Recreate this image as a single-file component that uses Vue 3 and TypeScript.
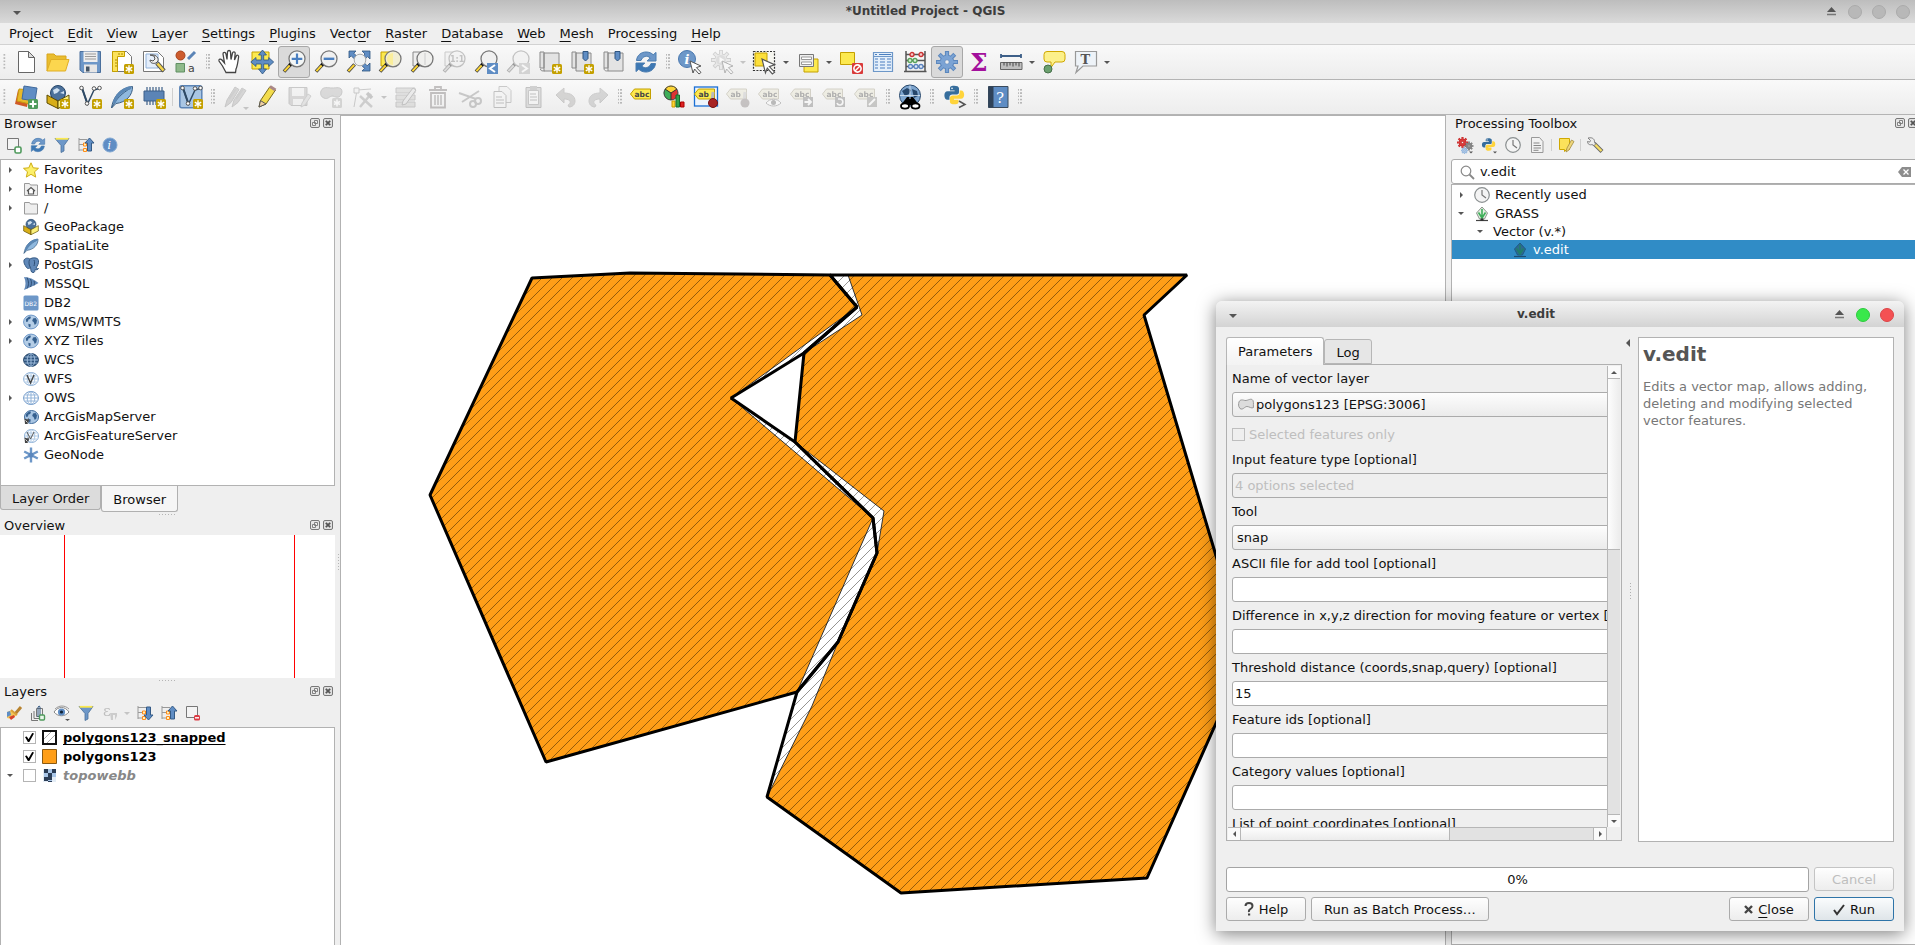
<script setup lang="ts">
import { ref } from 'vue'

interface MenuEntry { pre: string; key: string; post: string }
interface Tool { kind: 'button' | 'grip' | 'arrow' | 'sep'; icon?: string; label?: string; off?: boolean; active?: boolean; more?: boolean }
interface BrowserItem { name: string; icon: string; expandable?: boolean }
interface Field { id: string; label: string; value: string }

const menus: MenuEntry[] = [
  { pre: 'Pro', key: 'j', post: 'ect' },
  { pre: '', key: 'E', post: 'dit' },
  { pre: '', key: 'V', post: 'iew' },
  { pre: '', key: 'L', post: 'ayer' },
  { pre: '', key: 'S', post: 'ettings' },
  { pre: '', key: 'P', post: 'lugins' },
  { pre: 'Vect', key: 'o', post: 'r' },
  { pre: '', key: 'R', post: 'aster' },
  { pre: '', key: 'D', post: 'atabase' },
  { pre: '', key: 'W', post: 'eb' },
  { pre: '', key: 'M', post: 'esh' },
  { pre: 'Pro', key: 'c', post: 'essing' },
  { pre: '', key: 'H', post: 'elp' },
]

const b = (icon: string, label: string, extra: Partial<Tool> = {}): Tool => ({ kind: 'button', icon, label, ...extra })
const grip: Tool = { kind: 'grip' }
const arrow = (off = false): Tool => ({ kind: 'arrow', label: 'More', off })

const toolbarOne: Tool[] = [
  grip, b('page', 'New Project'), b('folder', 'Open Project'), b('save', 'Save Project'), b('layout', 'New Print Layout'),
  b('manager', 'Layout Manager'), b('style', 'Style Manager'),
  grip, b('hand', 'Pan Map'), b('panSel', 'Pan to Selection'), b('zoomIn', 'Zoom In', { active: true }), b('zoomOut', 'Zoom Out'),
  b('zoomFull', 'Zoom Full'), b('zoomSel', 'Zoom to Selection'), b('zoomLayer', 'Zoom to Layer'), b('zoomNative', 'Zoom to Native Resolution', { off: true }),
  b('zoomLast', 'Zoom Last'), b('zoomNext', 'Zoom Next', { off: true }), b('mapNew', 'New Map View'), b('bookNew', 'New Bookmark'),
  b('book', 'Show Bookmarks'), b('refresh', 'Refresh'),
  grip, b('identify', 'Identify Features'), b('action', 'Run Feature Action', { off: true }), arrow(true), b('select', 'Select Features'), arrow(),
  b('selectForm', 'Select by Value'), arrow(), b('deselect', 'Deselect'), b('table', 'Open Attribute Table'), b('abacus', 'Field Calculator'),
  b('gear', 'Processing Toolbox', { active: true }), b('sigma', 'Statistical Summary'), b('measure', 'Measure Line'), arrow(), b('tip', 'Map Tips'),
  b('annot', 'Text Annotation'), arrow(),
]

const toolbarTwo: Tool[] = [
  grip, b('sources', 'Data Source Manager'), b('gpkgNew', 'New GeoPackage Layer'), b('shpNew', 'New Shapefile Layer'), b('liteNew', 'New SpatiaLite Layer'),
  b('memNew', 'New Scratch Layer'), { kind: 'sep' }, b('virtual', 'New Virtual Layer'),
  grip, b('pencils', 'Current Edits', { off: true, more: true }), b('pencil', 'Toggle Editing'), b('saveEdit', 'Save Layer Edits', { off: true }),
  b('addPoly', 'Add Polygon Feature', { off: true }), b('vertex', 'Vertex Tool', { off: true }), arrow(true), b('modify', 'Modify Attributes', { off: true }),
  b('trash', 'Delete Selected', { off: true }), b('cut', 'Cut Features', { off: true }), b('copy', 'Copy Features', { off: true }),
  b('paste', 'Paste Features', { off: true }), b('undo', 'Undo', { off: true }), b('redo', 'Redo', { off: true }),
  grip, b('abc', 'Layer Labeling Options'), b('diagram', 'Diagram Options'), b('abcPin', 'Highlight Pinned Labels'), b('abPin', 'Pin Labels', { off: true }),
  b('abcEye', 'Show/Hide Labels', { off: true }), b('abcMove', 'Move Label', { off: true }), b('abcRot', 'Rotate Label', { off: true }),
  b('abcEdit', 'Change Label', { off: true }),
  grip, b('metasearch', 'MetaSearch'), grip, b('python', 'Python Console'), grip, b('help', 'Help Contents'), grip,
]

const browserTools = [['addLayer', 'Add Selected Layers'], ['refreshS', 'Refresh'], ['funnel', 'Filter Browser'], ['collapse', 'Collapse All'], ['info', 'Properties']]

const browserItems: BrowserItem[] = [
  { name: 'Favorites', icon: 'star', expandable: true },
  { name: 'Home', icon: 'home', expandable: true },
  { name: '/', icon: 'dir', expandable: true },
  { name: 'GeoPackage', icon: 'gpkg' },
  { name: 'SpatiaLite', icon: 'feather' },
  { name: 'PostGIS', icon: 'elephant', expandable: true },
  { name: 'MSSQL', icon: 'mssql' },
  { name: 'DB2', icon: 'db2' },
  { name: 'WMS/WMTS', icon: 'globe', expandable: true },
  { name: 'XYZ Tiles', icon: 'globe', expandable: true },
  { name: 'WCS', icon: 'wcs' },
  { name: 'WFS', icon: 'wfs' },
  { name: 'OWS', icon: 'ows', expandable: true },
  { name: 'ArcGisMapServer', icon: 'arcMap' },
  { name: 'ArcGisFeatureServer', icon: 'arcFeat' },
  { name: 'GeoNode', icon: 'geonode' },
]

const fields: Field[] = [
  { id: 'ascii', label: 'ASCII file for add tool [optional]', value: '' },
  { id: 'move', label: 'Difference in x,y,z direction for moving feature or vertex [optional]', value: '' },
  { id: 'threshold', label: 'Threshold distance (coords,snap,query) [optional]', value: '15' },
  { id: 'ids', label: 'Feature ids [optional]', value: '' },
  { id: 'cats', label: 'Category values [optional]', value: '' },
  { id: 'coords', label: 'List of point coordinates [optional]', value: '' },
]

const search = ref('v.edit')
const layerOneOn = ref(true)
const layerTwoOn = ref(true)
const layerThreeOn = ref(false)

const newBadge = '<g transform="translate(14 14)"><rect width="10" height="10" rx="1.5" fill="#c4a000"/><path d="M5 1.3v7.4M1.8 3.2l6.4 3.6M8.2 3.2L1.8 6.8" stroke="#fff" stroke-width="1.4"/></g>'
const lens = (fill: string, grey = false) =>
  `<path d="M8.6 14.4L2 21.6" stroke="#444" stroke-width="3.6"/><path d="M8.2 14.8L2.4 21.2" stroke="${grey ? '#bbb' : '#fcd535'}" stroke-width="2"/><path d="M7.6 15.4l3-3" stroke="#111" stroke-width="3.4"/><circle cx="15" cy="8.8" r="8" fill="${fill}" stroke="#777" stroke-width="1.3"/>`
const tag = (text: string) =>
  `<path d="M.5 9l4-5h16v10h-16z" fill="#fce94f" stroke="#c4a000"/><text x="4.500" y="11.800" font-family="DejaVu Sans" font-size="7.500" font-weight="bold" fill="#444">${text}</text>`
const cursor = '<path d="M0 0l11 5-4.6 1.6 4.6 4.8-2 1.6L4.6 8 3 12z" fill="#fff" stroke="#555"/>'
const gearPath = (r: number) => {
  let d = ''
  for (let i = 0; i < 8; i++) {
    const a = (i * Math.PI) / 4
    d += `M0 0L${(Math.cos(a) * r).toFixed(2)} ${(Math.sin(a) * r).toFixed(2)}`
  }
  return d
}
const gear = (x: number, y: number, r: number, fill: string, edge: string) =>
  `<g transform="translate(${x} ${y})"><path d="${gearPath(r)}" stroke="${edge}" stroke-width="${r * 0.38}"/><circle r="${r * 0.66}" fill="${edge}"/><path d="${gearPath(r * 0.92)}" stroke="${fill}" stroke-width="${r * 0.2}"/><circle r="${r * 0.58}" fill="${fill}"/><circle r="${r * 0.2}" fill="#eee" stroke="${edge}" stroke-width=".7"/></g>`
const land = '<path d="M2.800 5.200L6 2.400l2 .4-.8 2.200-1.800.6-.4 2-1.800.4zM10 4.600l2.600-.6 1.400 2.200-.6 3.400-1.600 1.400-1.200-3-1.400-1zM5.400 9.800l2.400.8-.6 3-1.600-1.200z" fill="#35608f"/>'
const grid = (c: string) => `<path d="M1 8h14M8 1.6v12.8M2.2 5h11.6M2.2 11h11.6" stroke="${c}" fill="none" stroke-width=".9"/><ellipse cx="8" cy="8" rx="3.8" ry="6.4" fill="none" stroke="${c}" stroke-width=".9"/>`
const pythonArt = '<path d="M12 2c-4 0-4.4 1.6-4.4 2.8V7h5v1H5C2.600 8 1.500 10 1.500 12.400S2.600 17 4.800 17H7v-2.600c0-2 1.400-3 3-3h5c1.600 0 2.400-1.200 2.400-2.600v-4C17.400 2.800 15 2 12 2z" fill="#366d9c"/><circle cx="9.800" cy="4.700" r=".9" fill="#fff"/><path d="M12.500 22c4 0 4.400-1.600 4.400-2.800V17h-5v-1h7.600c2.400 0 3.500-2 3.500-4.400S21.900 7 19.700 7h-1.600v2.600c0 2-1.400 3-3 3h-4.600c-1.600 0-3 1.200-3 2.600v4c0 2 2 2.800 5 2.800z" fill="#ffd43b"/>'
const refreshArt = '<path d="M2.500 10.500C3 5 7.500 2 12 2c3 0 5.500 1 7.200 2.800L22 2.400V11h-8.800l3-3C13.500 5 8.500 6 7 10.500z" fill="#6d97c8" stroke="#4a7cb0"/><path d="M21.500 13.500C21 19 16.500 22 12 22c-3 0-5.500-1-7.200-2.800L2 21.600V13h8.800l-3 3c2.700 3 7.700 2 9.200-2.500z" fill="#3d78b4" stroke="#4a7cb0"/>'
const feather = '<path d="M1.500 23C3 13 9 3 22.500 1.500 23 10 16 17.500 6 18.500z" fill="#8fb8de" stroke="#3b5f83"/><path d="M1.500 23C6 14 12 8 21 3" stroke="#3b5f83" fill="none"/><path d="M4 18C7 9 13 4 21 2.500" stroke="#5a87b5" stroke-width="3" fill="none"/>'
const boxArt = '<circle cx="12" cy="8" r="7.500" fill="#4c719b" stroke="#27476b"/><path d="M7 5l4-2 3 2-3 3-3 1zM14 8l4-2v3z" fill="#cfe0f0"/><path d="M1 10l11 6v7.500L1 18z" fill="#d8ae18" stroke="#5c4b00"/><path d="M23 10l-11 6v7.500L23 18z" fill="#fcf07a" stroke="#5c4b00"/>'
const vPath = '<path d="M4 3l5.500 16L16 5l5-1.500" fill="none" stroke="#2e4a66" stroke-width="1.500"/><path d="M4 3l5.500 16" stroke="#2e4a66" stroke-width="2"/><g fill="#fff" stroke="#555"><circle cx="3.500" cy="3" r="1.800"/><circle cx="9" cy="18.500" r="1.800"/><circle cx="16" cy="3.500" r="1.800"/><circle cx="21.500" cy="3" r="1.800"/></g>'
const funnelArt = '<path d="M1 1.500h14L10 8.500V14L7 15.500V8.500z" fill="#6d97c8" stroke="#4a7099" stroke-width=".8"/><path d="M1.500 1.800h13" stroke="#fce94f" stroke-width="1.800"/>'
const treeArt = '<path d="M1 1v13M1 2.500h8M1 7.500h4M1 13h4" stroke="#999" fill="none"/><path d="M5.500 6h3v3h-3zM5.500 11.500h3v3h-3z" fill="#fff3c0" stroke="#ff8c1a"/>'

const icons: Record<string, string> = {
  page: '<path d="M4.500 1.500h10l6 6v15h-16z" fill="#fff" stroke="#666"/><path d="M14.500 1.500v6h6z" fill="#ddd" stroke="#666"/>',
  folder: '<path d="M1 21V4h7l2 2h10v4" fill="#e9bd2f" stroke="#d9a51c"/><path d="M5 9.500h18L19.500 21H1z" fill="#fcd64e" stroke="#e0ae25"/>',
  save: '<path d="M2 1.500h20.500v21H5L2 20z" fill="#6d97c8" stroke="#4a6f9c"/><path d="M5.500 1.500h14V12h-14z" fill="#eee"/><path d="M7 4h11M7 6.500h11M7 9h11" stroke="#999" stroke-width="1.200"/><path d="M6 14.500h13v8H6z" fill="#e6e6e6"/><path d="M8 16.500h3.500v5H8z" fill="#456"/>',
  layout: '<path d="M2.500 1.500h14l5 5v15h-19z" fill="#fff" stroke="#777"/><path d="M2.500 1.500h12v5h-7v15h-5z" fill="#fce25a" stroke="#c4a000"/><path d="M5 10h2M5 13h2M5 16h2M9 3v2M12 3v2" stroke="#a98a00"/>' + newBadge,
  manager: '<path d="M1.500 1.500h14l6 6v14h-20z" fill="#fff" stroke="#777"/><path d="M4 4h12v14H4z" fill="#e4eefb" stroke="#8fb0d8"/><path d="M15 13l7 8" stroke="#555" stroke-width="4.500"/><path d="M15.500 13.500l6 7" stroke="#f5d54a" stroke-width="2.600"/><path d="M8 5l4 1 1 3-2 2-3-1c0 3 3 4 6 3l2-2c1-4-3-7-8-6z" fill="#eee" stroke="#555"/>',
  style: '<circle cx="6.500" cy="5.500" r="4.500" fill="#cd5c2e" stroke="#a8431c"/><path d="M14 9l7-7" stroke="#5b84b6" stroke-width="3"/><path d="M2 13.500h8.500V22H2z" fill="#8fb98a" stroke="#5f8f63"/><text x="14" y="21.500" font-family="DejaVu Sans" font-size="11" fill="#444">a</text>',
  hand: '<path d="M8 22.500L4.500 16 1 11c-.5-2 1.500-2.600 3-1l2.500 3L5 4c0-2 2.500-2.200 3 0l1 5.500L9.500 2c.3-2 2.800-2 3 0l.5 7.500L14.500 3c.5-1.800 2.800-1.500 2.700.4L16.500 10l1.800-4c.8-1.500 2.600-.8 2.300 1-.8 5-1.100 9-2.600 12l-.5 3.500z" fill="#fff" stroke="#444" stroke-width="1.300"/>',
  panSel: '<path d="M2 2h17v17H2z" fill="#fce94f" stroke="#c4a000"/><path d="M12.500 0l4 5h-2.800v5h5V7.500l5 4.500-5 4.500V14h-5v5h2.800l-4 5-4-5h2.800v-5H6v2.500L.8 12 6 7.500V10h5.300V5H8.500z" fill="#5f8dc4" stroke="#2f5580" stroke-width=".8"/>',
  zoomIn: lens('#f3f6f6') + '<path d="M15 3.500v10.600M9.700 8.800h10.600" stroke="#4a7fc0" stroke-width="2.200"/>',
  zoomOut: lens('#f0f0f0') + '<path d="M9.700 8.800h10.600" stroke="#4a7fc0" stroke-width="2.400"/>',
  zoomFull: '<path d="M3 1h7L7.800 3.200l3 3-2.600 2.600-3-3L3 8zM24 1v8l-2.400-2.400-3 3L16 7l3-3-3-3zM24 21h-8l2.600-2.600-3-3 2.600-2.600 3 3L24 13z" fill="#5f8dc4" stroke="#2f5580" stroke-width=".8"/><path d="M8.600 14.400L2 21.600" stroke="#444" stroke-width="3.600"/><path d="M8.200 14.800L2.400 21.200" stroke="#fcd535" stroke-width="2"/><circle cx="14" cy="10" r="5.800" fill="#eef2f4" stroke="#aaa"/>',
  zoomSel: '<path d="M3 2h12v14H3z" fill="#fce94f" stroke="#c4a000"/>' + lens('#f1eed2') + '<path d="M15 3a6 6 0 000 12z" fill="#fbee9a"/>',
  zoomLayer: '<path d="M3 2h12v14H3z" fill="#eee" stroke="#888"/>' + lens('#f0f0ee') + '<path d="M15 3v12" stroke="#ccc"/>',
  zoomNative: '<path d="M3 2h12v14H3z" fill="#eee" stroke="#888"/>' + lens('#f0f0f0', true) + '<text x="8" y="12" font-family="DejaVu Sans" font-size="8" font-weight="bold" fill="#777">1:1</text>',
  zoomLast: lens('#f0f0f0') + '<path d="M13 13h11v11H13z" fill="#5f8dc4"/><path d="M21 15l-5 3.500 5 3.500" stroke="#fff" fill="none" stroke-width="2"/>',
  zoomNext: lens('#f0f0f0', true) + '<path d="M13 13h11v11H13z" fill="#aaa"/><path d="M16 15l5 3.500-5 3.500" stroke="#fff" fill="none" stroke-width="2"/>',
  mapNew: '<path d="M2 2h4v16H2zM6 3h15v18H6z" fill="#e3e3e3" stroke="#8a8a8a"/><path d="M2.500 19c0 2 2 2 4 2" stroke="#8a8a8a" fill="none"/>' + newBadge,
  bookNew: '<path d="M2 2h4v16H2zM6 3h15v18H6z" fill="#e3e3e3" stroke="#8a8a8a"/><path d="M13 1.500h5v7l-2.500 2.500L13 8.500z" fill="#5f8dc4" stroke="#2f5580"/>' + newBadge,
  book: '<path d="M2 2h4v16H2zM6 3h15v18H6z" fill="#e3e3e3" stroke="#8a8a8a"/><path d="M2 18c0 3 2 3 4 3" stroke="#8a8a8a" fill="none"/><path d="M13 1.500h5v7l-2.500 2.500L13 8.500z" fill="#5f8dc4" stroke="#2f5580"/>',
  refresh: refreshArt,
  refreshS: `<g transform="scale(.667)">${refreshArt}</g>`,
  identify: '<circle cx="9" cy="9" r="8.500" fill="#6d97c8" stroke="#4a79b0"/><text x="6.500" y="14" font-family="DejaVu Serif" font-style="italic" font-weight="bold" font-size="13" fill="#fff">i</text><g transform="translate(12 11)">' + cursor + '</g>',
  action: gear(11, 10, 10, '#ddd', '#999') + '<circle cx="11" cy="10" r="5" fill="#bbb"/><path d="M9.500 7l5 3-5 3z" fill="#fff"/><g transform="translate(12 11)">' + cursor + '</g>',
  select: '<path d="M.5 1.500h21v19H.5z" fill="#f6f6f0" stroke="#333" stroke-width="1.200" stroke-dasharray="2 1.300"/><path d="M2 3h12v13H2z" fill="#fcdf3a" stroke="#c4a000"/><g transform="translate(9 9) scale(1.150)">' + cursor + '</g>',
  selectForm: '<path d="M8 9h14v13H8z" fill="#fce94f" stroke="#c4a000"/><path d="M3.500 4.500h14v12h-14z" fill="#eee" stroke="#777"/><path d="M5.500 7h10v2.500h-10zM5.500 12h10v2.500h-10z" fill="#fff" stroke="#999"/>',
  deselect: '<path d="M1.500 2.500h14v12h-14z" fill="#fce94f" stroke="#c4a000"/><rect x="13" y="13" width="11" height="11" rx="1" fill="#d93a3a"/><circle cx="18.500" cy="18.500" r="3.600" fill="none" stroke="#fff" stroke-width="1.600"/><path d="M21 16l-5 5" stroke="#fff" stroke-width="1.500"/>',
  table: '<path d="M2.500 2.500h19v19h-19z" fill="#e4effa" stroke="#6d97c8" stroke-width="1.200"/><path d="M2.500 6.500h19" stroke="#6d97c8"/><path d="M4 4.500h2M8 4.500h12M4 9h3M9 9h5M16 9h4M4 12h3M9 12h5M16 12h4M4 15h3M9 15h5M16 15h4M4 18h3M9 18h5M16 18h4" stroke="#4a7fc0" stroke-width="1.200"/>',
  abacus: '<path d="M3 1v20M22 1v20M1 21.500h22.500M3 4.500h19M3 10.500h19M3 16.500h19" stroke="#555" stroke-width="1.500"/><g stroke-width="1.300"><g fill="#f5caca" stroke="#c33"><circle cx="9" cy="4.500" r="2"/><circle cx="18" cy="4.500" r="2"/></g><g fill="#d8f0d8" stroke="#5aa25a"><circle cx="7" cy="10.500" r="2"/><circle cx="12" cy="10.500" r="2"/></g><g fill="#dfe9f6" stroke="#5b84c0"><circle cx="7.500" cy="16.500" r="2"/><circle cx="13" cy="16.500" r="2"/><circle cx="18" cy="16.500" r="2"/></g></g>',
  gear: gear(12, 12, 11, '#7ba3d4', '#5b87bd'),
  sigma: '<text x="3" y="21" font-family="DejaVu Serif" font-weight="bold" font-size="25" fill="#a3109c">Σ</text>',
  measure: '<path d="M2 6h20M2 4v4M22 4v4" stroke="#3d5f88" stroke-width="1.800"/><path d="M1.500 12.500h21.500v7H1.500z" fill="#bfbfbf" stroke="#666"/><path d="M5 12.500v3M8 12.500v4M11 12.500v3M14 12.500v4M17 12.500v3M20 12.500v4" stroke="#444"/>',
  tip: '<path d="M5 1.500h15q3 0 3 3V9q0 3-3 3h-7l-4 5.500V12H5q-3 0-3-3V4.500q0-3 3-3z" fill="#fcf08a" stroke="#d0a800"/><circle cx="6" cy="19" r="4" fill="#6ba06e" stroke="#46704a"/>',
  annot: '<path d="M1.500 1.500h21V16H9l-7 6.500L4 16H1.500z" fill="#eef3f8" stroke="#999" stroke-width="1.200"/><text x="6.500" y="13.500" font-family="DejaVu Serif" font-size="13" font-weight="bold" fill="#555">T</text>',
  sources: '<path d="M4 5l12 2-3 15L1 19z" fill="#cf5a26"/><path d="M5 4l13 1-2 14-13-3z" fill="#e8b92a" stroke="#c79a10"/><path d="M10 1l13 2-2 13-13-2z" fill="#5f8dc4" stroke="#40699c"/><rect x="14" y="14" width="10" height="10" rx="1.500" fill="#4f9a5c"/><path d="M19 15.500v7M15.500 19h7" stroke="#fff" stroke-width="2"/>',
  gpkgNew: boxArt + newBadge,
  shpNew: vPath + newBadge,
  liteNew: feather + newBadge,
  memNew: '<path d="M5 2v18M8 2v18M11 2v18M14 2v18M17 2v18M20 2v18" stroke="#3d5f88" stroke-width="1.200"/><path d="M2 6h20v10H2z" fill="#5b84b6" stroke="#3d5f88"/>' + newBadge,
  virtual: '<rect x=".8" y=".8" width="22" height="22" rx="2" fill="#a9c6e4" stroke="#5b84b6" stroke-width="1.500"/>' + vPath + newBadge,
  pencils: '<path d="M2 22l2-7L12 2l4 2.500-8 13zM9 22l2-7 8-12 4 2.500-8 12z" fill="#b0a6a6" stroke="#888"/><path d="M6 14l7-10M13 14l7-10" stroke="#999" stroke-width="2"/>',
  pencil: '<path d="M4 22l1.500-6.500L15 1.500l5.500 3.500L11 19z" fill="#f3dc4c" stroke="#7a6a1a"/><path d="M4 22l1.500-6.500L11 19z" fill="#eecfa0" stroke="#555"/><path d="M15 1.500l5.500 3.500" stroke="#a88" stroke-width="3"/>',
  saveEdit: '<path d="M2 2.500h18v18H4l-2-2z" fill="#b5abab" stroke="#888"/><path d="M5 3h12v8H5zM6 14h10v6H6z" fill="#eee"/><path d="M14 22l1-4 6-9 3 2-6 9z" fill="#ccc" stroke="#999"/>',
  addPoly: '<path d="M2 6c2-5 7-3 11-3s10-2 10 4c-1 6-5 6-9 4-4 0-5 4-9 2C2 12 1 9 2 6z" fill="#b5b0b0" stroke="#888"/><g transform="translate(13 13)"><rect width="10" height="10" rx="1.500" fill="#a8a8a0"/><path d="M5 1.500v7M2 3.500l6 3M8 3.500l-6 3" stroke="#fff" stroke-width="1.500"/></g>',
  vertex: '<path d="M3 22L6 5l14-1" fill="none" stroke="#888"/><path d="M3 3h5v5H3z" fill="#eee" stroke="#888"/><path d="M9 11l12 11M20 9L9 22" stroke="#999" stroke-width="2.500"/><path d="M16 8l5 5" stroke="#888" stroke-width="3.500"/>',
  modify: '<path d="M2 3h19v5H2zM2 10h19v5H2zM2 17h19v5H2z" fill="#c9c2b4" stroke="#888"/><path d="M8 20l1-4L19 3l3 2-10 14z" fill="#ddd" stroke="#777"/>',
  trash: '<path d="M3 5h18M9 5V2h6v3M5 8h14v14.500H5z" fill="none" stroke="#8a6a6a" stroke-width="1.800"/><path d="M9 10v10M12 10v10M15 10v10" stroke="#8a6a6a" stroke-width="1.500"/>',
  cut: '<path d="M1 8l17 6M4 17L21 6" stroke="#888" stroke-width="2"/><circle cx="20" cy="16" r="3" fill="none" stroke="#888" stroke-width="2"/><circle cx="15" cy="19" r="3" fill="none" stroke="#888" stroke-width="2"/>',
  copy: '<path d="M9 1.500h8l4 4v12H9z" fill="#eee" stroke="#888"/><path d="M4 6.500h8l4 4v12H4z" fill="#f4f4f4" stroke="#777"/><path d="M6 12h6M6 15h8M6 18h8" stroke="#777"/>',
  paste: '<path d="M4 2.500h15v20H4z" fill="#bbb" stroke="#777"/><path d="M6.500 5.500h10v14h-10z" fill="#f4f4f4" stroke="#888"/><path d="M8 1h7v4H8z" fill="#999"/><path d="M8 9h6M8 12h7M8 15h7" stroke="#777"/>',
  undo: '<path d="M2 10l8-7v5c7 0 11 3 11 8 0 4-3 6-6 6l-1-2c3-1 4-6-4-6v4z" fill="#b0a49c" stroke="#998d85"/>',
  redo: '<path d="M22 10l-8-7v5C7 8 3 11 3 16c0 4 3 6 6 6l1-2c-3-1-4-6 4-6v4z" fill="#a8a8a8" stroke="#909090"/>',
  abc: tag('abc'),
  diagram: '<circle cx="9" cy="8" r="7" fill="#d33"/><path d="M9 8L3 4a7 7 0 0112 0z" fill="#fcd535"/><path d="M9 8L3 4a7 7 0 006 11z" fill="#3fae5a"/><circle cx="9" cy="8" r="7" fill="none" stroke="#444"/><path d="M9 8l6-4M9 8L3 4M9 8v7" stroke="#333"/><path d="M10 16h3v6h-3z" fill="#fcd535" stroke="#c90"/><path d="M14 10h3.500v12H14z" fill="#2ea24b" stroke="#176b2c"/><path d="M18.500 17h3.500v5h-3.500z" fill="#d22" stroke="#a00"/>',
  abcPin: '<rect x=".5" y="2" width="23" height="19" fill="#eef4fb" stroke="#1a6fd4" stroke-width="1.300"/>' + tag('ab') + '<path d="M19 7l-1 10" stroke="#bbb" stroke-width="3"/><circle cx="19" cy="18" r="4.500" fill="#a82424" stroke="#701414"/>',
  abPin: tag('ab') + '<path d="M19 7l-1 10" stroke="#bbb" stroke-width="3"/><circle cx="19" cy="18" r="4.500" fill="#a87474"/>',
  abcEye: tag('abc') + '<path d="M8 18c4-5 11-5 15 0-4 4-11 4-15 0z" fill="#fff" stroke="#777"/><circle cx="15.500" cy="17.500" r="2.500" fill="#666"/>',
  abcMove: tag('abc') + '<path d="M13 12h10v10H13z" fill="#777"/><path d="M14.500 17h6M18 14l3 3-3 3" stroke="#fff" fill="none" stroke-width="1.800"/>',
  abcRot: tag('abc') + '<path d="M13 12h10v10H13z" fill="#777"/><path d="M15 18a3 3 0 103-4h-2" stroke="#fff" fill="none" stroke-width="1.600"/>',
  abcEdit: tag('abc') + '<path d="M13 12h10v10H13z" fill="#8a8a78"/><path d="M15 20l6-6" stroke="#fff" stroke-width="2"/>',
  metasearch: '<circle cx="12" cy="10.500" r="10.500" fill="#7fa6cf" stroke="#27476b"/><path d="M4 6l5-3 4 2-2 4-4 2zM14 4l5 2 1 5-4 2z" fill="#27476b"/><path d="M2 10.500h20M12 .5v20" stroke="#dce8f4" stroke-width=".8"/><path d="M9 12h2.500v2h1V12H15l6 8H3z" fill="#000"/><ellipse cx="7" cy="21" rx="4" ry="2.600" fill="#fff" stroke="#000" stroke-width="1.800"/><ellipse cx="17.500" cy="21" rx="4" ry="2.600" fill="#fff" stroke="#000" stroke-width="1.800"/>',
  python: '<g transform="translate(1 -1) scale(.92)">' + pythonArt + '</g><path d="M17 16l6 3.500-6 3" stroke="#555" fill="none" stroke-width="1.500"/>',
  help: '<path d="M2.500 1.500h19.500v21H2.500z" fill="#5f8dc4" stroke="#3a4a5c"/><path d="M2.500 1.500h5v21h-5z" fill="#2f4259"/><text x="10" y="17.500" font-family="DejaVu Serif" font-size="15" fill="#fff">?</text>',
  addLayer: '<path d="M1.500 1.500h11v11h-11z" fill="#f4f4f4" stroke="#777"/><rect x="9" y="10" width="6" height="6" rx="1.500" fill="#fff" stroke="#4f9a5c" stroke-width="1.600"/>',
  funnel: funnelArt,
  collapse: treeArt + '<path d="M11.500 1l4.500 5h-2.500v8h-4V6H7z" fill="#5f8dc4" stroke="#345a86"/>',
  expand: treeArt + '<path d="M11.500 15L16 10h-2.500V2h-4v8H7z" fill="#5f8dc4" stroke="#345a86"/>',
  info: '<circle cx="8" cy="8" r="7" fill="#5f8dc4" stroke="#82a8d2"/><text x="5.500" y="12" font-family="DejaVu Serif" font-style="italic" font-size="11" fill="#fff">i</text>',
  star: '<path d="M8 .8l2.200 5 5.300.5-4 3.500 1.200 5.300L8 12.300l-4.700 2.800 1.200-5.300-4-3.500 5.300-.5z" fill="#fcf06a" stroke="#cfae14"/>',
  home: '<path d="M1.500 14.500v-12h5l1 1.500h7v10.500z" fill="#eee" stroke="#999"/><path d="M4 10l4-3.500 4 3.500M5.500 9.500v3.500h5V9.500" fill="#fff" stroke="#555" stroke-width="1.200"/>',
  dir: '<path d="M1.500 14V2.500h5l1 1.500h7V14z" fill="#eee" stroke="#999"/>',
  gpkg: `<g transform="scale(.667)">${boxArt}</g>`,
  feather: `<g transform="scale(.667)">${feather}</g>`,
  elephant: '<path d="M1 3c2-3 5-1.500 6-1 2-1.500 8-2 8.500 1.500.4 3-1 5-2.500 7.500 1 1 2 .5 2.500.5-.6 1.400-2.500 1.500-3.500 1-.3 2 0 3-2 3-2.500 0-2-3-2.500-5-1 1-3 1.500-4 0C2 8 .4 6 1 3z" fill="#6088b8" stroke="#365a84"/><path d="M6.500 2.500c-1 3-.5 6 1 8M11 3c1 2 .5 4 0 6" stroke="#2e4f76" fill="none"/>',
  mssql: '<path d="M1 1c5 0 10 2 14.500 6C12 9 6 12 1 14c2-4 2-9 0-13z" fill="#6088b8"/><path d="M4 1.500c2 4 2 8 0 11M7.500 3c1.500 3 1 5.500 0 8M11 5c.6 1.500.5 3 0 4.500" stroke="#2e4f76" fill="none"/>',
  db2: '<rect x=".5" y=".5" width="15" height="15" rx="1.500" fill="#6d97c8"/><text x="1.500" y="10.500" font-family="DejaVu Sans" font-size="6" fill="#fff">DB2</text>',
  globe: '<ellipse cx="8" cy="8" rx="7.400" ry="6.900" fill="#b4cde6" stroke="#6d97c8"/>' + land,
  wcs: '<ellipse cx="8" cy="8" rx="7.400" ry="6.500" fill="#2f5580" stroke="#27476b"/>' + grid('#a7c4e2'),
  wfs: '<ellipse cx="8" cy="8" rx="7.400" ry="6.500" fill="#fff" stroke="#8aaed6"/>' + grid('#a7c4e2') + '<path d="M4 4l3.500 8L11 4" fill="none" stroke="#444" stroke-width="1.400"/>',
  ows: '<ellipse cx="8" cy="8" rx="7.400" ry="6.500" fill="#fff" stroke="#6d97c8"/>' + grid('#8aaed6'),
  arcMap: '<ellipse cx="8.500" cy="8" rx="7" ry="6.500" fill="#a7c4e2" stroke="#3d6a9c"/>' + land + '<path d="M1.500 9.500l3 1 1-1.500.5 3-1.500 3H2z" fill="#444"/><path d="M2.500 11.500l2 2" stroke="#fff" stroke-width=".8"/>',
  arcFeat: '<ellipse cx="8.500" cy="8" rx="7" ry="6.500" fill="#fff" stroke="#8aaed6"/>' + grid('#a7c4e2') + '<path d="M4 4l3.500 7L11 4" fill="none" stroke="#555"/><path d="M1.500 9.500l3 1 1-1.500.5 3-1.500 3H2z" fill="#444"/><path d="M2.500 11.500l2 2" stroke="#fff" stroke-width=".8"/>',
  geonode: '<path d="M8 .5v15M1.200 4.500l13.600 7M14.800 4.500l-13.600 7" stroke="#6d97c8" stroke-width="2.400"/><circle cx="8" cy="8" r="2.600" fill="#5b87bd"/>',
  brush: '<path d="M1 7l5-2 5 5-6 4-4-1z" fill="#f2c75a"/><path d="M1 7l3-1 1 4-4 2z" fill="#5f8dc4"/><path d="M3 12l5-2 1 2-4 3z" fill="#d9432a"/><path d="M9 9l6-7" stroke="#b8832f" stroke-width="3"/><path d="M5 5l6 5" stroke="#d9a13c" stroke-width="2"/>',
  group: '<path d="M6.500 3.500h6v8h-6zM4 6v7.500h6M1.500 8v7.500H8" fill="none" stroke="#777"/><path d="M8 12V2q1.500-2 2 0v8" stroke="#365a84" fill="none"/><rect x="9.500" y="10" width="5" height="5" rx="1" fill="#eaf6ea" stroke="#4f9a5c" stroke-width="1.400"/>',
  eye: '<path d="M0 7c4-6 11-6 15 0-4 5-11 5-15 0z" fill="#fff" stroke="#888"/><circle cx="7.500" cy="7" r="3.600" fill="#5f8dc4"/><circle cx="7.500" cy="7" r="1.600" fill="#123"/><path d="M1 4c4-4 10-4 14 0" stroke="#999" fill="none"/><path d="M11 14h5l-2.500 2z" fill="#555"/>',
  epsilon: '<text x="1" y="11" font-family="DejaVu Serif" font-size="15" fill="#777">ε</text><path d="M8 8h7v3l-2 4v-5h-2v5H9z" fill="#999"/>',
  remove: '<path d="M1.500 1.500h11v11h-11z" fill="#f4f4f4" stroke="#777"/><rect x="9" y="10" width="6" height="5.500" rx="1.500" fill="#dc3b44"/><path d="M10 12.800h4" stroke="#fff" stroke-width="1.400"/>',
  gears: gear(5.5, 5.5, 5.5, '#d93a3a', '#c22626') + gear(12, 9, 4.5, '#888', '#777') + gear(7.5, 13.5, 3.5, '#a9c6e8', '#8aaed6') + '<path d="M12 14.500h4l-2 2z" fill="#555"/>',
  pythonS: `<g transform="scale(.62)">${pythonArt}</g><path d="M12 14.500h4l-2 2z" fill="#555"/>`,
  clock: '<circle cx="8" cy="8" r="7.300" fill="#f4f4f4" stroke="#8a8f90" stroke-width="1.200"/><path d="M8 3v5l4 3" fill="none" stroke="#777" stroke-width="1.200"/>',
  doc: '<path d="M2.500.5h8l3.500 4v11H2.500z" fill="#f2f2f2" stroke="#999"/><path d="M4.500 6h6M4.500 8.500h7.500M4.500 11h7.500M4.500 13.300h5" stroke="#888"/>',
  editInPlace: '<path d="M1.500 1.500h10v11h-3l-2 2v-2h-5z" fill="#fce25a" stroke="#d0a800"/><path d="M8 15l1-4 4.500-8 2.500 1.500L11 13z" fill="#f0d77a" stroke="#a08a40" stroke-width=".8"/>',
  wrenchS: '<path d="M7 6.500l8 8" stroke="#666" stroke-width="4"/><path d="M7.500 7l7 7" stroke="#f5dd63" stroke-width="2.400"/><path d="M3 .8L1 1l2.500 2.500-.8 1.600L.5 4.500C.3 7 3 8.500 5 7.500l2 1.200L8.600 7 7.400 5C8 2.500 5.500.5 3 .8z" fill="#eee" stroke="#777" stroke-width=".9"/>',
  grass: '<path d="M8 1l5.500 6-3 6h-5l-3-6z" fill="#e4efe2" stroke="#8a948a"/><path d="M8 3v10M8 12L4.500 6.500M8 12l3.500-5.500" stroke="#3fae5a" stroke-width="1.600" fill="none"/><path d="M2 14.500h12" stroke="#444" stroke-width="1.200"/><path d="M6.500 12.500h3V15h-3z" fill="#333"/>',
  grassSel: '<path d="M8 1l5.500 6-3 6h-5l-3-6z" fill="#2e6a90" stroke="#1f5c84"/><path d="M8 3v10M8 12L4.500 6.500M8 12l3.500-5.500" stroke="#1f7f6a" stroke-width="1.600" fill="none"/><path d="M2 14.500h12" stroke="#1c4d70" stroke-width="1.200"/>',
  floatWin: '<rect x=".5" y=".5" width="9" height="9" rx="1.500" fill="#e6e6e6" stroke="#777"/><path d="M4.500 2.500h3v3h-3zM2.500 4.500h3v3h-3z" fill="#eee" stroke="#777" stroke-width=".9"/>',
  closeWin: '<rect x=".5" y=".5" width="9" height="9" rx="1.500" fill="#e0e0e0" stroke="#777"/><path d="M2.800 2.800l4.400 4.400M7.200 2.800L2.800 7.200" stroke="#555" stroke-width="1.800"/>',
  searchGlass: '<circle cx="6" cy="6" r="4.800" fill="none" stroke="#888" stroke-width="1.200"/><path d="M9.500 9.500L14 14" stroke="#888" stroke-width="1.800"/>',
  clear: '<path d="M0 6l4-5h9v10H4z" fill="#8d8d8d"/><path d="M5.500 3.500l5 5M10.500 3.500l-5 5" stroke="#fff" stroke-width="1.300"/>',
  polygon: '<path d="M1 4c1-3 4-2 6-1.500 3 .3 6-3 8 0 1 3 0 5 .5 7-2 1.500-4-1-6.500-1-2.500 0-4 4-7 2C0 8 .5 6 1 4z" fill="#dcdcdc" stroke="#999"/>',
  eject: '<path d="M4.500 0L9 5H0z" fill="#555"/><path d="M0 7.500h9" stroke="#777" stroke-width="1.500"/>',
}

const dockButtons = [['floatWin', 'Float panel'], ['closeWin', 'Close panel']]

const layerTools = [
  { icon: 'brush', label: 'Layer Styling' }, { icon: 'group', label: 'Add Group' }, { icon: 'eye', label: 'Map Themes' },
  { icon: 'funnel', label: 'Filter Legend' }, { icon: 'epsilon', label: 'Filter by Expression', off: true, drop: true },
  { icon: 'expand', label: 'Expand All' }, { icon: 'collapse', label: 'Collapse All' }, { icon: 'remove', label: 'Remove Layer' },
]

const boundaryLeft = '532,278 630,273 830,275 857,307'
const boundaryEnd = '797,692 546,762 430,495'
const leftOriginal = `${boundaryLeft} 731,398 873,518 ${boundaryEnd}`
const leftSnapped = `${boundaryLeft} 804,353 731,398 795,442 873,518 877,553 838,642 ${boundaryEnd}`
const rightOuter = '767,797 901,893 1147,878 1246,656 1144,315 1187,275'
const rightOriginal = `848,275 862,315 804,353 795,442 884,511 877,553 838,642 812,706 ${rightOuter}`
const rightSnapped = `830,275 857,307 804,353 795,442 873,518 877,553 838,642 797,692 ${rightOuter}`
</script>

<template>
  <div class="desktop">
    <header class="titlebar main-title">
      <button class="tri" aria-label="Window menu"></button>
      <h1>*Untitled Project - QGIS</h1>
      <div class="win-buttons">
        <button aria-label="Shade"><svg width="9" height="9" viewBox="0 0 9 9" v-html="icons.eject" /></button>
        <button v-for="n in ['Minimize', 'Maximize', 'Close']" :key="n" :aria-label="n"><span class="dot"></span></button>
      </div>
    </header>

    <nav class="menubar">
      <button v-for="m in menus" :key="m.pre + m.key + m.post">{{ m.pre }}<u>{{ m.key }}</u>{{ m.post }}</button>
    </nav>

    <div v-for="(bar, i) in [toolbarOne, toolbarTwo]" :key="i" class="toolbar" role="toolbar">
      <template v-for="(t, j) in bar" :key="j">
        <span v-if="t.kind === 'grip'" class="grip"></span>
        <span v-else-if="t.kind === 'sep'" class="sep"></span>
        <button v-else-if="t.kind === 'arrow'" class="drop" :class="{ off: t.off }" :aria-label="t.label"></button>
        <button v-else class="tool" :class="{ active: t.active, off: t.off, more: t.more }" :aria-label="t.label">
          <svg width="24" height="24" viewBox="0 0 24 24" v-html="icons[t.icon!]" />
        </button>
      </template>
    </div>

    <main class="work">
      <aside class="left">
        <section class="dock browser">
          <div class="dock-title"><h2>Browser</h2>
            <button v-for="d in dockButtons" :key="d[0]" :aria-label="d[1]"><svg width="10" height="10" viewBox="0 0 10 10" v-html="icons[d[0]]" /></button>
          </div>
          <div class="small-tools">
            <button v-for="t in browserTools" :key="t[0]" :aria-label="t[1]"><svg width="16" height="16" viewBox="0 0 16 16" v-html="icons[t[0]]" /></button>
          </div>
          <ul class="tree">
            <li v-for="item in browserItems" :key="item.name">
              <span class="twist" :class="{ closed: item.expandable }"></span>
              <svg width="16" height="16" viewBox="0 0 16 16" v-html="icons[item.icon]" />
              <span>{{ item.name }}</span>
            </li>
          </ul>
          <div class="dock-tabs" role="tablist">
            <button role="tab">Layer Order</button>
            <button role="tab" class="current">Browser</button>
          </div>
        </section>
        <span class="hgrip"></span>
        <section class="dock overview">
          <div class="dock-title"><h2>Overview</h2>
            <button v-for="d in dockButtons" :key="d[0]" :aria-label="d[1]"><svg width="10" height="10" viewBox="0 0 10 10" v-html="icons[d[0]]" /></button>
          </div>
          <div class="overview-canvas"><div class="extent"></div></div>
        </section>
        <span class="hgrip"></span>
        <section class="dock layers">
          <div class="dock-title"><h2>Layers</h2>
            <button v-for="d in dockButtons" :key="d[0]" :aria-label="d[1]"><svg width="10" height="10" viewBox="0 0 10 10" v-html="icons[d[0]]" /></button>
          </div>
          <div class="small-tools">
            <template v-for="t in layerTools" :key="t.icon">
              <button :aria-label="t.label" :class="{ off: t.off }"><svg width="16" height="16" viewBox="0 0 16 16" v-html="icons[t.icon]" /></button>
              <button v-if="t.drop" class="drop off" aria-label="More"></button>
            </template>
          </div>
          <ul class="tree layer-tree">
            <li>
              <span class="twist"></span>
              <label><input v-model="layerOneOn" type="checkbox" />
                <svg width="15" height="15" viewBox="0 0 15 15"><path d="M1 1h13v13H1z" fill="#fff" stroke="#111" stroke-width="2" /><path d="M2 9l7-7M5 13l8-8" stroke="#aaa" /></svg>
                <span class="bold under">polygons123_snapped</span></label>
            </li>
            <li>
              <span class="twist"></span>
              <label><input v-model="layerTwoOn" type="checkbox" />
                <svg width="15" height="15" viewBox="0 0 15 15"><path d="M.5.5h14v14H.5z" fill="#ff9e17" stroke="#8a5a12" /></svg>
                <span class="bold">polygons123</span></label>
            </li>
            <li>
              <span class="twist open"></span>
              <label><input v-model="layerThreeOn" type="checkbox" />
                <svg width="15" height="15" viewBox="0 0 15 15"><path d="M1 1h13v13H1z" fill="#e4edf6" /><path d="M2 1h4v4H2zM10 1h4v4h-4zM6 5h4v4H6zM2 9h4v4H2zM6 13h4v1H6z" fill="#2c3e57" /><path d="M6 1h4v4H6zM10 5h4v4h-4zM2 5h4v4H2zM6 9h4v4H6z" fill="#a9c6e8" /><path d="M6 5h4v4H6zM6 9h4v3H6z" fill="#2c3e57" /></svg>
                <span class="bold faded">topowebb</span></label>
            </li>
          </ul>
        </section>
      </aside>

      <span class="vgrip"></span>

      <section class="map">
        <svg width="100%" height="100%" role="img" aria-label="Map canvas">
          <defs>
            <pattern id="hatch" width="10" height="10" patternUnits="userSpaceOnUse">
              <path d="M-1 11L11 -1M-1 1L1 -1M9 11L11 9" stroke="#000" stroke-opacity=".42" stroke-width="1" />
            </pattern>
          </defs>
          <g transform="translate(-341 -116)">
            <g fill="#ff9e17" stroke="#333" stroke-width="1">
              <polygon :points="leftOriginal" /><polygon :points="rightOriginal" />
            </g>
            <g fill="url(#hatch)" stroke="#000" stroke-width="3" stroke-linejoin="bevel">
              <polygon :points="leftSnapped" /><polygon :points="rightSnapped" />
            </g>
          </g>
        </svg>
      </section>

      <aside class="right">
        <div class="dock-title"><h2>Processing Toolbox</h2>
          <button v-for="d in dockButtons" :key="d[0]" :aria-label="d[1]"><svg width="10" height="10" viewBox="0 0 10 10" v-html="icons[d[0]]" /></button>
        </div>
        <div class="small-tools">
          <button v-for="n in ['gears', 'pythonS', 'clock', 'doc']" :key="n" :aria-label="n"><svg width="16" height="16" viewBox="0 0 16 16" v-html="icons[n]" /></button>
          <span class="sep"></span>
          <button aria-label="Edit in place"><svg width="16" height="16" viewBox="0 0 16 16" v-html="icons.editInPlace" /></button>
          <span class="sep"></span>
          <button aria-label="Options"><svg width="16" height="16" viewBox="0 0 16 16" v-html="icons.wrenchS" /></button>
        </div>
        <div class="search">
          <svg width="14" height="14" viewBox="0 0 14 14" v-html="icons.searchGlass" />
          <input v-model="search" type="text" aria-label="Search algorithms" />
          <button aria-label="Clear" @click="search = ''"><svg width="13" height="12" viewBox="0 0 13 12" v-html="icons.clear" /></button>
        </div>
        <ul class="tree toolbox">
          <li><span class="twist closed"></span><svg width="16" height="16" viewBox="0 0 16 16" v-html="icons.clock" /><span>Recently used</span></li>
          <li><span class="twist open"></span><svg width="16" height="16" viewBox="0 0 16 16" v-html="icons.grass" /><span>GRASS</span></li>
          <li class="sub"><span class="twist open"></span><span>Vector (v.*)</span></li>
          <li class="leaf"><svg width="16" height="16" viewBox="0 0 16 16" v-html="icons.grassSel" /><span>v.edit</span></li>
        </ul>
      </aside>
    </main>

    <section class="dialog" role="dialog" aria-label="v.edit">
      <header class="titlebar">
        <button class="tri" aria-label="Window menu"></button>
        <h1>v.edit</h1>
        <div class="win-buttons">
          <button aria-label="Shade"><svg width="9" height="9" viewBox="0 0 9 9" v-html="icons.eject" /></button>
          <button aria-label="Maximize"><span class="dot green"></span></button>
          <button aria-label="Close"><span class="dot red"></span></button>
        </div>
      </header>
      <div class="dialog-body">
        <div class="split">
          <div class="params">
            <div class="tabs" role="tablist">
              <button role="tab" class="current">Parameters</button>
              <button role="tab">Log</button>
            </div>
            <div class="scroll-frame">
              <div class="viewport">
                <form class="form" @submit.prevent>
                  <label for="layer">Name of vector layer</label>
                  <div class="combo">
                    <svg width="16" height="12" viewBox="0 0 16 12" v-html="icons.polygon" />
                    <select id="layer" class="with-icon"><option>polygons123 [EPSG:3006]</option></select>
                  </div>
                  <label class="check"><input type="checkbox" disabled />Selected features only</label>
                  <label for="ftype">Input feature type [optional]</label>
                  <input id="ftype" type="text" value="4 options selected" disabled />
                  <label for="tool">Tool</label>
                  <select id="tool"><option>snap</option></select>
                  <template v-for="f in fields" :key="f.id">
                    <label :for="f.id">{{ f.label }}</label>
                    <input :id="f.id" v-model="f.value" type="text" />
                  </template>
                </form>
              </div>
              <div class="vbar"><button class="up" aria-label="Scroll up"></button><span class="thumb"></span><span class="trough"></span><button class="down" aria-label="Scroll down"></button></div>
              <div class="hbar"><button class="back" aria-label="Scroll left"></button><span class="thumb"></span><span class="trough"></span><button class="fore" aria-label="Scroll right"></button></div>
            </div>
          </div>
          <div class="handle"><button class="fold" aria-label="Collapse help"></button><span class="vdots"></span></div>
          <article class="help">
            <h2>v.edit</h2>
            <p>Edits a vector map, allows adding, deleting and modifying selected vector features.</p>
          </article>
        </div>
        <div class="row progress-row">
          <div class="progress" role="progressbar" aria-valuenow="0">0%</div>
          <button class="push" disabled>Cancel</button>
        </div>
        <div class="row">
          <button class="push"><svg width="10" height="14" viewBox="0 0 10 14"><path d="M1.500 4q0-3 3.500-3t3.500 3q0 1.800-2 3T5 10" fill="none" stroke="#444" stroke-width="2" /><path d="M4 11.500h2.200v2H4z" fill="#444" /></svg>Help</button>
          <button class="push batch">Run as Batch Process…</button>
          <span class="grow"></span>
          <button class="push"><svg width="9" height="9" viewBox="0 0 9 9"><path d="M1 1l7 7M8 1L1 8" stroke="#444" stroke-width="2.400" /></svg><span><u>C</u>lose</span></button>
          <button class="push default"><svg width="12" height="11" viewBox="0 0 12 11"><path d="M1 6l3 4 7-9" fill="none" stroke="#333" stroke-width="2" /></svg>Run</button>
        </div>
      </div>
    </section>
  </div>
</template>

<style>
body { margin: 0; overflow: hidden; }
.desktop svg text { user-select: none; }
</style>

<style scoped>
* { box-sizing: border-box; }
.desktop { position: relative; display: flex; flex-direction: column; height: 100vh; overflow: hidden; background: #efefef; color: #111; font: 13px/17px "DejaVu Sans", sans-serif; }
button { margin: 0; padding: 0; border: 0; background: none; color: inherit; font: inherit; }
input, select { margin: 0; font: inherit; color: inherit; }
h1, h2, p, ul { margin: 0; padding: 0; font-size: 13px; font-weight: normal; }
ul { list-style: none; }
u { text-underline-offset: 3px; text-decoration-skip-ink: none; }
svg { flex: none; display: block; fill: none; overflow: visible; }
.map svg { overflow: hidden; }

.titlebar { display: flex; flex: none; align-items: center; height: 26px; padding: 1px 5px 0; background: linear-gradient(#f3f3f3, #d3d3d3); }
.main-title { height: 23px; padding: 0; background: linear-gradient(#bdbdbd, #dadada); }
.titlebar h1 { flex: 1; font-size: 12px; font-weight: bold; text-align: center; color: #3c3c3c; }
.main-title h1 { padding-left: 8px; }
.tri { position: relative; width: 24px; height: 20px; }
.tri::before { content: ""; position: absolute; left: 8px; top: 9px; border: 4px solid transparent; border-top-color: #555; border-bottom: 0; }
.main-title .tri::before { left: 13px; }
.win-buttons { display: flex; }
.win-buttons button { display: flex; align-items: center; justify-content: center; width: 24px; height: 22px; }
.dot { width: 14px; height: 14px; border: 1px solid #ababab; border-radius: 7px; background: #b8b8b8; }
.dot.green { background: #39e84b; border-color: #2ecb3e; }
.dot.red { background: #f45153; border-color: #dc4547; }

.menubar { display: flex; flex: none; height: 22px; padding-left: 2px; border-bottom: 1px solid #d2d2d2; }
.menubar button { padding: 0 7px 1px; }

.toolbar { display: flex; flex: none; align-items: center; height: 35px; border-bottom: 1px solid #b4b4b4; background: linear-gradient(#f9f9f9, #ededed); }
.grip { flex: none; width: 12px; height: 16px; padding: 0 4px; background: radial-gradient(circle at 1px 1px, #b8b8b8 1px, transparent 1px) 4px 0 / 3px 3px; background-repeat: space; background-clip: content-box; }
.grip:first-child { width: 10px; padding: 0 4px 0 2px; }
.sep { flex: none; }
.toolbar .sep { width: 5px; height: 18px; background: linear-gradient(#cfcfcf, #cfcfcf) center / 1px 100% no-repeat; }
.tool { position: relative; display: flex; flex: none; align-items: center; justify-content: center; width: 32px; height: 32px; border: 1px solid transparent; border-radius: 3px; }
.tool.active { background: #dadada; border-color: #a8a8a8; }
.off svg { opacity: 0.4; filter: grayscale(0.85); }
.tool.more::after { content: ""; position: absolute; right: 1px; bottom: 2px; border: 3px solid transparent; border-top-color: #c4c4c4; border-bottom: 0; }
.drop { flex: none; width: 11px; height: 24px; }
.drop::before { content: ""; display: block; width: 0; margin-left: 2px; border: 3px solid transparent; border-top-color: #555; border-bottom: 0; }
.drop.off::before { border-top-color: #c4c4c4; }

.work { display: flex; flex: 1; min-height: 0; width: calc(100% + 5px); }
.left { display: flex; flex: none; flex-direction: column; width: 335px; }
.dock { display: flex; flex-direction: column; flex: none; }
.dock-title { display: flex; flex: none; align-items: center; height: 18px; padding: 0 2px 2px 4px; }
.dock-title h2 { flex: 1; }
.dock-title button { margin-left: 3px; }
.small-tools { display: flex; flex: none; align-items: center; height: 26px; padding: 0 0 2px 2px; }
.small-tools button:not(.drop) { display: flex; justify-content: center; width: 24px; }
.small-tools .drop { width: 11px; height: 4px; }
.small-tools .sep { width: 3px; height: 12px; margin-left: 2px; border-left: 1px solid #cfcfcf; }
.tree { background: #fff; border: 1px solid #b2b2b2; overflow: hidden; }
.tree li { display: flex; align-items: center; height: 19px; padding-left: 4px; white-space: nowrap; }
.tree li > svg { margin-right: 5px; }
.twist { display: flex; flex: none; align-items: center; justify-content: center; width: 10px; margin-right: 8px; }
.twist.closed::before { content: ""; border: 3px solid transparent; border-left-color: #555; border-right: 0; }
.twist.open::before { content: ""; border: 3px solid transparent; border-top-color: #555; border-bottom: 0; }
.browser .tree { height: 327px; }
.dock-tabs { display: flex; align-items: flex-start; }
.dock-tabs button { height: 24px; padding: 1px 11px 0; border: 1px solid #b0b0b0; border-top: 0; border-radius: 0 0 3px 3px; background: #dcdcdc; }
.dock-tabs .current { height: 26px; background: #f6f6f6; }
.hgrip { align-self: center; flex: none; width: 17px; height: 1px; margin: 2px 0; background: repeating-linear-gradient(90deg, #b5b5b5 0 1px, transparent 1px 3px); }
.overview-canvas { height: 143px; background: #fff; }
.extent { height: 100%; margin: 0 40px 0 64px; border: solid #f00; border-width: 0 1px; }
.layers { flex: 1; }
.layer-tree { flex: 1; border-bottom: 0; }
.layer-tree label { display: flex; align-items: center; }
.layer-tree svg { margin: 0 6px; }
.bold { font-weight: bold; color: #000; }
.under { text-decoration: underline; text-underline-offset: 2px; text-decoration-skip-ink: none; }
.faded { color: #888; font-style: italic; }
input[type="checkbox"] { position: relative; flex: none; appearance: none; width: 13px; height: 13px; border: 1px solid #b4b4b4; background: #fff; }
input[type="checkbox"]:checked::after { content: ""; position: absolute; inset: 1px; background: #000; clip-path: polygon(0 45%, 20% 40%, 40% 70%, 80% 0, 100% 5%, 48% 100%, 32% 100%); }

.vgrip { flex: none; align-self: stretch; width: 5px; background: repeating-linear-gradient(#b5b5b5 0 1px, transparent 1px 3px) 3px 439px / 1px 17px no-repeat; }
.map { flex: 1; min-width: 0; border: solid #b2b2b2; border-width: 1px 1px 0; background: #fff; overflow: hidden; }
.right { display: flex; flex: none; flex-direction: column; width: 474px; padding-left: 5px; }
.search { display: flex; flex: none; align-items: center; height: 25px; padding: 0 8px; border: 1px solid #ababab; border-radius: 3px; background: #fff; }
.search input { flex: 1; min-width: 0; padding: 0 6px; border: 0; outline: 0; background: none; }
.toolbox { flex: 1; padding-top: 0; }
.toolbox .sub { height: 17px; padding-left: 23px; }
.toolbox .leaf { padding-left: 60px; background: #308cc6; color: #fff; }

.dialog { position: absolute; right: 11px; bottom: 14px; display: flex; flex-direction: column; width: 688px; height: 630px; border-radius: 6px 6px 0 0; background: #efefef; box-shadow: 0 3px 18px rgba(0, 0, 0, 0.5); }
.dialog .titlebar { border-radius: 6px 6px 0 0; }
.dialog-body { display: flex; flex: 1; flex-direction: column; min-height: 0; padding: 10px; }
.split { display: flex; flex: 1; min-height: 0; }
.params { display: flex; flex-direction: column; width: 396px; margin-bottom: 1px; }
.tabs { display: flex; align-items: flex-end; position: relative; height: 28px; margin-bottom: -1px; }
.tabs button { height: 25px; margin-bottom: 1px; padding: 1px 11px 0; border: 1px solid #b6b6b6; border-radius: 3px 3px 0 0; background: #e6e6e6; }
.tabs .current { height: 28px; margin-bottom: 0; padding-top: 0; border-bottom: 0; background: linear-gradient(#fff, #f3f3f3); }
.scroll-frame { display: grid; grid-template: 1fr 13px / 1fr 13px; flex: 1; min-height: 0; padding: 1px 1px 0; border: 1px solid #b0b0b0; }
.viewport { overflow: hidden; min-width: 0; min-height: 0; }
.form { display: flex; flex-direction: column; gap: 5px; width: 637px; padding: 4px; }
.form label { height: 17px; }
.form input[type="text"], .form select { width: 100%; height: 25px; padding: 0 2px; border: 1px solid #ababab; border-radius: 3px; background: #fff; outline: 0; }
.form input[type="text"]:disabled { background: #efefef; color: #bebebe; }
.form select { appearance: none; padding: 0 4px; background: linear-gradient(#fdfdfd, #ebebeb); color: #111; }
.form select.with-icon { padding-left: 23px; }
.combo { position: relative; }
.combo svg { position: absolute; left: 6px; top: 6px; }
.form .check { display: flex; align-items: center; gap: 4px; height: 24px; color: #bebebe; }
.check input { background: #efefef; border-color: #bebebe; }
.vbar, .hbar { display: flex; }
.vbar { flex-direction: column; border-left: 1px solid #b6b6b6; }
.hbar { border-top: 1px solid #b6b6b6; border-right: 1px solid #b6b6b6; }
.vbar button, .hbar button { display: flex; flex: none; align-items: center; justify-content: center; width: 12px; height: 12px; background: #fafafa; }
.vbar button::before, .hbar button::before { content: ""; border: 3px solid transparent; }
.vbar .up::before { border-bottom-color: #555; border-top: 0; }
.vbar .down::before { border-top-color: #555; border-bottom: 0; }
.hbar .back::before { border-right-color: #555; border-left: 0; }
.hbar .fore::before { border-left-color: #555; border-right: 0; }
.vbar .thumb { flex: 171; border: solid #b6b6b6; border-width: 1px 0; background: linear-gradient(90deg, #fdfdfd, #ececec); }
.vbar .trough { flex: 265; background: #e2e2e2; border-bottom: 1px solid #b6b6b6; }
.hbar .thumb { flex: 210; border: solid #b6b6b6; border-width: 0 1px; background: linear-gradient(#fdfdfd, #ececec); }
.hbar .trough { flex: 144; background: #e2e2e2; border-right: 1px solid #b6b6b6; }
.handle { display: flex; flex-direction: column; align-items: center; justify-content: space-between; width: 16px; padding-top: 2px; }
.fold { margin-right: 4px; }
.fold::before { content: ""; display: block; border: 4px solid transparent; border-right-color: #555; border-left: 0; }
.vdots { width: 1px; height: 17px; margin-bottom: 242px; background: repeating-linear-gradient(#b0b0b0 0 1px, transparent 1px 3px); }
.help { flex: 1; min-width: 0; padding: 4px; border: 1px solid #b2b2b2; background: #fff; color: #777; }
.help h2 { margin-bottom: 12px; font-size: 20px; line-height: 24px; font-weight: bold; color: #555; }
.row { display: flex; flex: none; gap: 5px; }
.progress-row { margin: 25px 0 5px; }
.progress { flex: 1; height: 25px; line-height: 23px; border: 1px solid #a4a4a4; border-radius: 3px; background: #fff; text-align: center; }
.push { display: flex; align-items: center; justify-content: center; gap: 5px; min-width: 80px; height: 24px; border: 1px solid #ababab; border-radius: 3px; background: linear-gradient(#fefefe, #ededed); }
.push:disabled { color: #bebebe; border-color: #c4c4c4; }
.push.default { border-color: #2f74a8; background: linear-gradient(#fafcfd, #dfe5e9); }
.batch { padding: 0 12px; }
.grow { flex: 1; }
</style>
